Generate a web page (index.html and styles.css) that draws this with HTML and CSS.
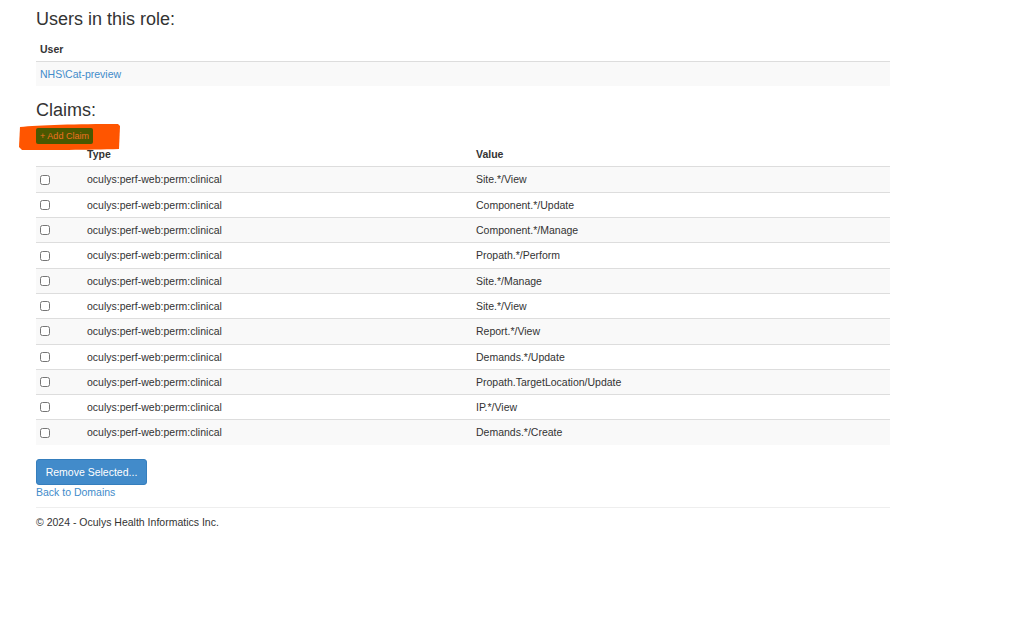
FILE: index.html
```html
<!DOCTYPE html>
<html lang="en">
<head>
    <meta charset="UTF-8">
    <title>Role Details</title>
    <link rel="stylesheet" href="styles.css">
</head>
<body>

<div class="container">
    <h3>Users in this role:</h3>
    <table class="table">
        <thead>
            <tr><th>User</th></tr>
        </thead>
        <tbody>
            <tr><td><a href="#">NHS\Cat-preview</a></td></tr>
        </tbody>
    </table>

    <h3>Claims:</h3>
    <div class="add-row">
        <span class="marker">
            <svg width="104" height="28" viewBox="0 0 104 28">
                <path d="M2 4 C20 2 60 1 100 1 L102 3 L101 26 C70 27 30 27 4 27 L1 24 Z" fill="#ff5500"/>
            </svg>
        </span>
        <button class="btn-add">+ Add Claim</button>
    </div>
    <table class="table claims">
        <colgroup>
            <col class="col-check">
            <col class="col-type">
            <col>
        </colgroup>
        <thead>
            <tr><th></th><th>Type</th><th>Value</th></tr>
        </thead>
        <tbody>
            <tr><td><input type="checkbox"></td><td>oculys:perf-web:perm:clinical</td><td>Site.*/View</td></tr>
            <tr><td><input type="checkbox"></td><td>oculys:perf-web:perm:clinical</td><td>Component.*/Update</td></tr>
            <tr><td><input type="checkbox"></td><td>oculys:perf-web:perm:clinical</td><td>Component.*/Manage</td></tr>
            <tr><td><input type="checkbox"></td><td>oculys:perf-web:perm:clinical</td><td>Propath.*/Perform</td></tr>
            <tr><td><input type="checkbox"></td><td>oculys:perf-web:perm:clinical</td><td>Site.*/Manage</td></tr>
            <tr><td><input type="checkbox"></td><td>oculys:perf-web:perm:clinical</td><td>Site.*/View</td></tr>
            <tr><td><input type="checkbox"></td><td>oculys:perf-web:perm:clinical</td><td>Report.*/View</td></tr>
            <tr><td><input type="checkbox"></td><td>oculys:perf-web:perm:clinical</td><td>Demands.*/Update</td></tr>
            <tr><td><input type="checkbox"></td><td>oculys:perf-web:perm:clinical</td><td>Propath.TargetLocation/Update</td></tr>
            <tr><td><input type="checkbox"></td><td>oculys:perf-web:perm:clinical</td><td>IP.*/View</td></tr>
            <tr><td><input type="checkbox"></td><td>oculys:perf-web:perm:clinical</td><td>Demands.*/Create</td></tr>
        </tbody>
    </table>

    <button class="btn-primary">Remove Selected...</button>
    <div><a href="#">Back to Domains</a></div>

    <hr>
    <footer>
        <p>&copy; 2024 - Oculys Health Informatics Inc.</p>
    </footer>
</div>

</body>
</html>
```

FILE: styles.css
```css
body {
    font-family: "Liberation Sans", Arial, sans-serif;
    font-size: 10.5px;
    line-height: 14.3px;
    color: #333;
    background-color: #fff;
    margin: 0;
}
.container {
    width: 854px;
    margin-left: 36px;
}
h3 {
    font-size: 18px;
    font-weight: normal;
    line-height: 1.1;
    margin: 10px 0 7px 0;
}
a {
    color: #428bca;
    text-decoration: none;
}
.table {
    width: 100%;
    border-collapse: collapse;
    margin-bottom: 15px;
}
.table th,
.table td {
    text-align: left;
    padding: 5px 4px;
    vertical-align: middle;
}
.table th {
    font-weight: bold;
    border-bottom: 1px solid #ddd;
}
.table td {
    border-top: 1px solid #ddd;
}
.table thead + tbody tr:first-child td {
    border-top: 0;
}
.table tbody tr:nth-child(odd) {
    background-color: #f9f9f9;
}
.claims {
    table-layout: fixed;
    margin-bottom: 14px;
}
.col-check {
    width: 47px;
}
.col-type {
    width: 389px;
}
.claims input[type="checkbox"] {
    width: 10px;
    height: 10px;
    margin: 0;
    display: block;
}
.add-row {
    position: relative;
    height: 14px;
}
.marker {
    position: absolute;
    left: -18px;
    top: -5px;
}
.btn-add {
    position: relative;
    font-family: "Liberation Sans", Arial, sans-serif;
    font-size: 9px;
    line-height: 12px;
    padding: 2px 0;
    color: #f07020;
    background-color: #4a5800;
    border: 0;
    border-radius: 2px;
    width: 57px;
    white-space: nowrap;
}
.btn-primary {
    font-family: "Liberation Sans", Arial, sans-serif;
    font-size: 10.5px;
    line-height: 14px;
    padding: 5px 0;
    color: #fff;
    background-color: #428bca;
    border: 1px solid #357ebd;
    border-radius: 3px;
    width: 111px;
    height: 26px;
    white-space: nowrap;
}
hr {
    border: 0;
    border-top: 1px solid #eee;
    margin: 8px 0 0 0;
}
footer p {
    margin: 7px 0 0 0;
}
```
